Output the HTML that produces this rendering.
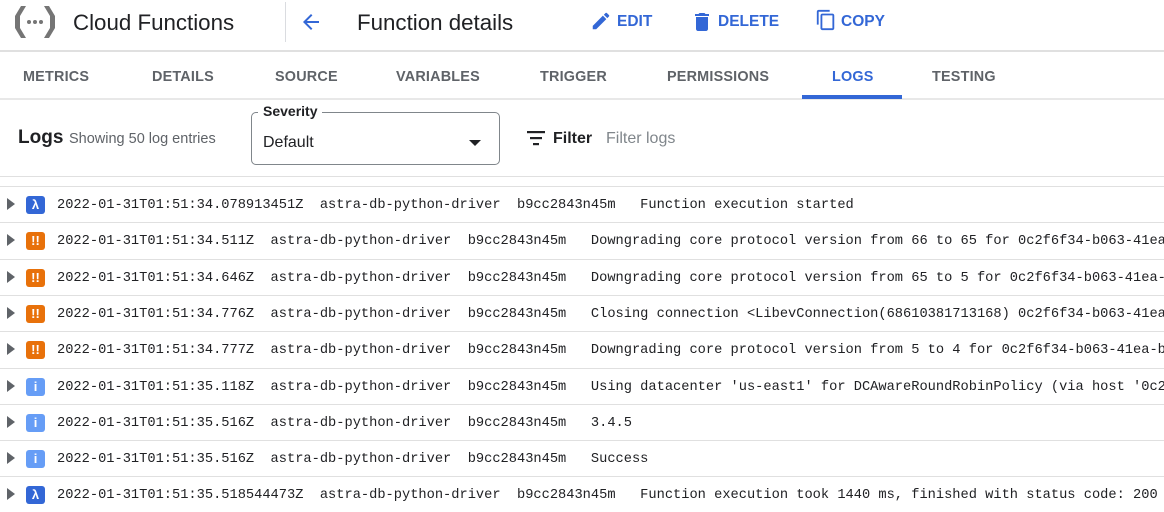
<!DOCTYPE html>
<html><head><meta charset="utf-8"><style>
*{margin:0;padding:0;box-sizing:border-box}
body{width:1164px;height:508px;overflow:hidden;background:#fff;font-family:"Liberation Sans",Arial,sans-serif;position:relative;color:#202124}
.abs{position:absolute}
.hdr{top:0;left:0;width:1164px;height:52px;border-bottom:2px solid #e0e0e0}
.tab{position:absolute;top:68px;font-size:15px;font-weight:bold;color:#5f6368;letter-spacing:0.2px;transform:scaleX(0.96);transform-origin:left}
.row{position:absolute;left:0;width:1164px;height:36.4px;border-top:1px solid #e0e0e0}
.row .tri{position:absolute;left:7px;top:11px;width:0;height:0;border-left:8px solid #5f6368;border-top:6.5px solid transparent;border-bottom:6.5px solid transparent}
.row .ic{position:absolute;left:26px;top:9px;width:19px;height:18px;border-radius:3px;color:#fff;font-size:13px;font-weight:bold;text-align:center;line-height:18px;font-family:"Liberation Sans",sans-serif}
.row pre{position:absolute;left:57px;top:10px;font-family:"Liberation Mono",monospace;font-size:13.7px;color:#202124;white-space:pre;line-height:18px}
.lam{background:#3367d6}
.warn{background:#e8710a}
.inf{background:#669df6}
.btn{position:absolute;top:13px;font-size:15.5px;font-weight:bold;color:#3367d6}
</style></head><body>
<div class="abs hdr"></div>
<svg class="abs" style="left:12px;top:4px" width="46" height="36" viewBox="0 0 46 36">
<path d="M9 2 L3 12 L3 24 L9 34 L14 34 L8 24 L8 12 L14 2Z" fill="#757575"/>
<path d="M37 2 L43 12 L43 24 L37 34 L32 34 L38 24 L38 12 L32 2Z" fill="#757575"/>
<circle cx="17" cy="18" r="2" fill="#757575"/><circle cx="23" cy="18" r="2" fill="#757575"/><circle cx="29" cy="18" r="2" fill="#757575"/>
</svg>
<div class="abs" style="left:73px;top:10px;font-size:22.3px">Cloud Functions</div>
<div class="abs" style="left:285px;top:2px;width:1px;height:40px;background:#dadce0"></div>
<svg class="abs" style="left:299px;top:10px" width="24" height="24" viewBox="0 0 24 24"><path d="M20 11H7.83l5.59-5.59L12 4l-8 8 8 8 1.41-1.41L7.83 13H20v-2z" fill="#3367d6"/></svg>
<div class="abs" style="left:357px;top:10px;font-size:22.3px">Function details</div>
<svg class="abs" style="left:590px;top:10px" width="22" height="22" viewBox="0 0 24 24"><path d="M3 17.25V21h3.75L17.81 9.94l-3.75-3.75L3 17.25zM20.71 7.04a1 1 0 000-1.41l-2.34-2.34a1 1 0 00-1.41 0l-1.83 1.83 3.75 3.75 1.83-1.83z" fill="#3367d6"/></svg>
<div class="btn" style="left:617px">EDIT</div>
<svg class="abs" style="left:690px;top:10px" width="24" height="24" viewBox="0 0 24 24"><path d="M6 19c0 1.1.9 2 2 2h8c1.1 0 2-.9 2-2V7H6v12zM19 4h-3.5l-1-1h-5l-1 1H5v2h14V4z" fill="#3367d6"/></svg>
<div class="btn" style="left:718px">DELETE</div>
<svg class="abs" style="left:815px;top:9px" width="22" height="22" viewBox="0 0 24 24"><path d="M16 1H4c-1.1 0-2 .9-2 2v14h2V3h12V1zm3 4H8c-1.1 0-2 .9-2 2v14c0 1.1.9 2 2 2h11c1.1 0 2-.9 2-2V7c0-1.1-.9-2-2-2zm0 16H8V7h11v14z" fill="#3367d6"/></svg>
<div class="btn" style="left:841px">COPY</div>

<div class="tab" style="left:23px">METRICS</div>
<div class="tab" style="left:152px">DETAILS</div>
<div class="tab" style="left:275px">SOURCE</div>
<div class="tab" style="left:396px">VARIABLES</div>
<div class="tab" style="left:540px">TRIGGER</div>
<div class="tab" style="left:667px">PERMISSIONS</div>
<div class="tab" style="left:832px;color:#3367d6">LOGS</div>
<div class="tab" style="left:932px">TESTING</div>
<div class="abs" style="left:0;top:98px;width:1164px;height:2px;background:#e8e8e8"></div>
<div class="abs" style="left:802px;top:95px;width:100px;height:4px;background:#3367d6"></div>

<div class="abs" style="left:18px;top:127px;font-size:19px;font-weight:bold">Logs</div>
<div class="abs" style="left:69px;top:131px;font-size:14.5px;color:#5f6368">Showing 50 log entries</div>
<div class="abs" style="left:251px;top:112px;width:249px;height:53px;border:1px solid #80868b;border-radius:5px"></div>
<div class="abs" style="left:258px;top:103px;padding:0 5px;background:#fff;font-size:14px;font-weight:bold">Severity</div>
<div class="abs" style="left:263px;top:134px;font-size:16px">Default</div>
<div class="abs" style="left:469px;top:140px;border-top:6px solid #202124;border-left:6px solid transparent;border-right:6px solid transparent"></div>
<svg class="abs" style="left:526px;top:129px" width="20" height="18" viewBox="0 0 20 18"><rect x="1" y="2" width="18" height="2.2" fill="#202124"/><rect x="4" y="8" width="12" height="2.2" fill="#202124"/><rect x="7" y="14" width="6" height="2.2" fill="#202124"/></svg>
<div class="abs" style="left:553px;top:130px;font-size:16px;font-weight:bold">Filter</div>
<div class="abs" style="left:606px;top:130px;font-size:16px;color:#80868b">Filter logs</div>
<div class="abs" style="left:0;top:176px;width:1164px;height:1px;background:#e0e0e0"></div>

<div class="row" style="top:186px"><div class="tri"></div><div class="ic lam">λ</div><pre>2022-01-31T01:51:34.078913451Z  astra-db-python-driver  b9cc2843n45m   Function execution started</pre></div>
<div class="row" style="top:222px"><div class="tri"></div><div class="ic warn">!!</div><pre>2022-01-31T01:51:34.511Z  astra-db-python-driver  b9cc2843n45m   Downgrading core protocol version from 66 to 65 for 0c2f6f34-b063-41ea-b</pre></div>
<div class="row" style="top:258.5px"><div class="tri"></div><div class="ic warn">!!</div><pre>2022-01-31T01:51:34.646Z  astra-db-python-driver  b9cc2843n45m   Downgrading core protocol version from 65 to 5 for 0c2f6f34-b063-41ea-b</pre></div>
<div class="row" style="top:295px"><div class="tri"></div><div class="ic warn">!!</div><pre>2022-01-31T01:51:34.776Z  astra-db-python-driver  b9cc2843n45m   Closing connection &lt;LibevConnection(68610381713168) 0c2f6f34-b063-41ea</pre></div>
<div class="row" style="top:331px"><div class="tri"></div><div class="ic warn">!!</div><pre>2022-01-31T01:51:34.777Z  astra-db-python-driver  b9cc2843n45m   Downgrading core protocol version from 5 to 4 for 0c2f6f34-b063-41ea-b</pre></div>
<div class="row" style="top:367.5px"><div class="tri"></div><div class="ic inf">i</div><pre>2022-01-31T01:51:35.118Z  astra-db-python-driver  b9cc2843n45m   Using datacenter 'us-east1' for DCAwareRoundRobinPolicy (via host '0c2</pre></div>
<div class="row" style="top:404px"><div class="tri"></div><div class="ic inf">i</div><pre>2022-01-31T01:51:35.516Z  astra-db-python-driver  b9cc2843n45m   3.4.5</pre></div>
<div class="row" style="top:440px"><div class="tri"></div><div class="ic inf">i</div><pre>2022-01-31T01:51:35.516Z  astra-db-python-driver  b9cc2843n45m   Success</pre></div>
<div class="row" style="top:476px"><div class="tri"></div><div class="ic lam">λ</div><pre>2022-01-31T01:51:35.518544473Z  astra-db-python-driver  b9cc2843n45m   Function execution took 1440 ms, finished with status code: 200</pre></div>
</body></html>
